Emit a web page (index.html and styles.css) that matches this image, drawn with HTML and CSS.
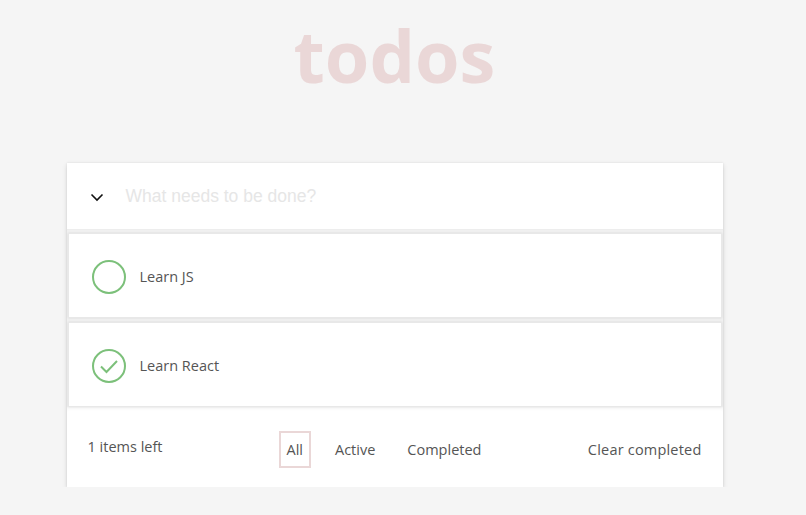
FILE: index.html
```html
<!DOCTYPE html>
<html>
<head>
<meta charset="utf-8">
<link rel="stylesheet" href="styles.css">
</head>
<body>
<div class="page">
  <h1 class="title">todos</h1>
  <section class="app">
    <div class="header">
      <span class="toggle">
        <svg width="14" height="10" viewBox="0 0 14 10"><path d="M1.5 2.5 L7 8 L12.5 2.5" fill="none" stroke="#111" stroke-width="1.6"/></svg>
      </span>
      <span class="new">What needs to be done?</span>
    </div>
    <ul class="list">
      <li class="item">
        <svg class="check" width="36" height="36" viewBox="0 0 36 36"><circle cx="18" cy="18" r="16" fill="none" stroke="#7cc07a" stroke-width="2"/></svg>
        <span class="label">Learn JS</span>
      </li>
      <li class="item">
        <svg class="check" width="36" height="36" viewBox="0 0 36 36"><circle cx="18" cy="18" r="16" fill="none" stroke="#7cc07a" stroke-width="2"/><path d="M10 18.5 L15.5 24 L26 13" fill="none" stroke="#7cc07a" stroke-width="2"/></svg>
        <span class="label">Learn React</span>
      </li>
    </ul>
    <div class="footer">
      <span class="count">1 items left</span>
      <div class="filters">
        <span class="filter selected">All</span>
        <span class="filter">Active</span>
        <span class="filter">Completed</span>
      </div>
      <span class="clear">Clear completed</span>
    </div>
  </section>
</div>
</body>
</html>
```
FILE: styles.css
```css
html, body {
  margin: 0;
  padding: 0;
  background: #f5f5f5;
}
body {
  font-family: "Open Sans", "Noto Sans", sans-serif;
  color: #4d4d4d;
}
.page {
  width: 789px;
  padding-top: 7px;
}
.title {
  margin: 0;
  height: 156px;
  text-align: center;
  font-family: "Open Sans", sans-serif;
  font-weight: 700;
  font-size: 72px;
  line-height: 96px;
  color: #ead7d7;
}
.app {
  width: 656px;
  margin: 0 auto;
  background: #fff;
  box-shadow: 0 2px 5px rgba(0,0,0,0.13), 0 0 2px rgba(0,0,0,0.08);
}
.header {
  height: 66px;
  display: flex;
  align-items: center;
  border-bottom: 1px solid #ededed;
  background: #fff;
}
.toggle {
  padding-left: 23px;
  margin-right: 22px;
}
.toggle svg { display: block; margin-top: 2px; }
.new {
  font-family: "Liberation Sans", Arial, sans-serif;
  font-size: 17.5px;
  color: #e6e6e6;
}
.list {
  list-style: none;
  margin: 0;
  padding: 3px 0 0;
  background: #f0f0f0;
  display: flex;
  flex-direction: column;
  gap: 4px;
}
.item {
  height: 83px;
  margin: 0 1px;
  background: #fff;
  border: 1px solid #e8e8e8;
  box-shadow: 0 0 2px rgba(0,0,0,0.1);
  display: flex;
  align-items: center;
  padding-left: 24px;
}
.check { display: block; margin-left: -2px; margin-top: 2px; }
.label {
  margin-left: 13px;
  font-size: 14.5px;
  color: #555;
  margin-top: 2px;
}
.footer {
  height: 80px;
  display: flex;
  align-items: center;
  padding: 0 21px 0 21px;
  font-size: 14.5px;
  color: #555;
  background: #fff;
  box-shadow: inset 0 4px 4px -3px rgba(0,0,0,0.06);
}
.count { width: 191px; margin-top: -2px; }
.filters {
  display: flex;
  align-items: center;
  gap: 22px;
  margin-top: 4px;
}
.filter {
  padding: 7px 6px;
  border: 2px solid transparent;
}
.filter.selected {
  border-color: #ead7d7;
}
.filter + .filter { margin-left: -6px; }
.clear { margin-left: auto; margin-top: 4px; letter-spacing: 0.2px; }
```
